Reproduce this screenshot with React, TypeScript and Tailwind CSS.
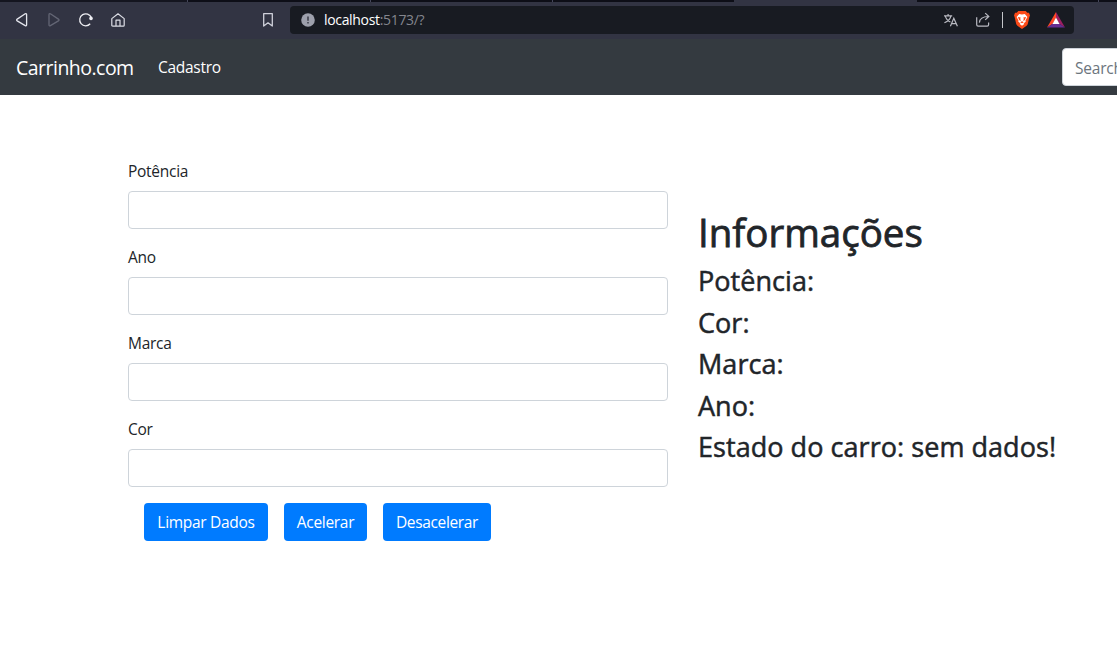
const segoe = "font-['Open_Sans','Noto_Sans',sans-serif]";

function BrowserBar() {
  return (
    <div className="shrink-0">
      <div className="flex h-[2px] bg-[#0d0e17]">
        <div className="w-[188px] border-r border-[#44465a] bg-[#14151f]" />
        <div className="w-[183px] border-r border-[#44465a]" />
        <div className="w-[182px] border-r border-[#44465a]" />
        <div className="w-[181px]" />
        <div className="w-[183px] bg-[#323443]" />
        <div className="w-[182px] border-r border-[#44465a]" />
      </div>
      <div className="flex h-[37px] items-center bg-[#323443] pb-px">
        <svg className="ml-[14px] size-4 shrink-0" viewBox="0 0 16 16" fill="none" stroke="#e4e5ec" strokeWidth="1.3" strokeLinejoin="round">
          <path d="M11.2 1.8Q12.6 1.2 12.6 2.8V12.8Q12.6 14.4 11.2 13.6L3.2 8.9Q2 8 3.2 7.1Z" />
        </svg>
        <svg className="ml-4 size-4 shrink-0" viewBox="0 0 16 16" fill="none" stroke="#646675" strokeWidth="1.3" strokeLinejoin="round">
          <path d="M4.4 1.8Q3 1.2 3 2.8V12.8Q3 14.4 4.4 13.6L12.4 8.9Q13.6 8 12.4 7.1Z" />
        </svg>
        <svg className="ml-4 size-4 shrink-0" viewBox="0 0 16 16" fill="none" stroke="#eeeef3" strokeWidth="1.3">
          <path d="M12.2 11.8A6 6 0 1 1 13.3 5.6" />
          <circle cx="13" cy="6.4" r="1.8" fill="#eeeef3" stroke="none" />
        </svg>
        <svg className="ml-4 size-4 shrink-0" viewBox="0 0 16 16" fill="none" stroke="#dcdde5" strokeWidth="1.2" strokeLinejoin="round">
          <path d="M1.8 6.6L8 1.8L14.2 6.6V13.2Q14.2 14.2 13.2 14.2H2.8Q1.8 14.2 1.8 13.2ZM6 14.2V8.2H10V14.2" />
        </svg>
        <svg className="ml-[134px] size-4 shrink-0" viewBox="0 0 16 16" fill="none" stroke="#cfd0da" strokeWidth="1.3" strokeLinejoin="round">
          <path d="M3.7 1.6H12.3V14L8 10.8L3.7 14Z" />
        </svg>
        <div className="ml-[14px] flex h-7 w-[784px] items-center rounded bg-[#181b22]">
          <svg className="ml-[11px] size-[14px] shrink-0" viewBox="0 0 14 14">
            <circle cx="7" cy="7" r="6.8" fill="#9da0ac" />
            <path d="M7 3.6V7.8M7 9V10.6" stroke="#4a4c58" strokeWidth="1.8" />
          </svg>
          <span className="ml-[9px] text-[14px] leading-5 tracking-[-0.33px] text-[#84868e]">
            <span className="text-white">localhost</span>:5173/?
          </span>
          <svg className="mr-4 ml-auto size-4 shrink-0" viewBox="0 0 16 16" fill="none" stroke="#b9bac2" strokeWidth="1.2">
            <path d="M1 3.8H9.2M5.1 2V3.8M2.3 3.8C3 6.8 5.2 9 7.4 10M7.9 3.8C7.4 6.8 4.6 9.5 1.4 10.8M7.4 14.3L10.8 6.3L14.4 14.3M8.6 11.7H13.2" />
          </svg>
          <svg className="mr-[11px] size-4 shrink-0" viewBox="0 0 16 16" fill="none" stroke="#b9bac2" strokeWidth="1.2">
            <path d="M1.7 5.2V12.8Q1.7 14.2 3.1 14.2H12.2Q13.6 14.2 13.6 12.8V10.6M4.4 10.6C4.7 6.7 7 4.5 13.6 4.5M10.2 1.1L13.8 4.5L10.2 7.9" />
          </svg>
          <div className="h-4 w-px bg-[#c5c6cb]" />
          <svg className="ml-[11px] h-[18px] w-4 shrink-0" viewBox="0 0 16 18">
            <path d="M4.3 0H11.7L13.3 1.7L15 1.8L16 4.4L15.4 6L13.7 13.2L12.6 14.8L8 18L3.4 14.8L2.3 13.2L.6 6L0 4.4L1 1.8L2.7 1.7Z" fill="#fb4a18" />
            <path d="M5.2 3L8 3.5L10.8 3L13.4 6.1L11.5 9.5L11.7 10.8L9.7 12.2L10.3 13L8 14.7L5.7 13L6.3 12.2L4.3 10.8L4.5 9.5L2.6 6.1Z" fill="#fff" />
            <path d="M3.9 6.1L6.7 6.6L6.2 8L7 9.8L5.2 9.2ZM12.1 6.1L9.3 6.6L9.8 8L9 9.8L10.8 9.2ZM6.2 11.2L8 10.3L9.8 11.2L8 12.2Z" fill="#fb4a18" />
          </svg>
          <svg className="mr-[9px] ml-[17px] h-4 w-[18px] shrink-0" viewBox="0 0 18 16">
            <path d="M9 0L0 15.5L6 11.5L9 6Z" fill="#ff4724" />
            <path d="M9 0L18 15.5L12 11.5L9 6Z" fill="#9e1f63" />
            <path d="M0 15.5H18L12 11.5H6Z" fill="#662d91" />
            <path d="M9 5.5L12.5 11.9H5.5Z" fill="#fff" />
          </svg>
        </div>
      </div>
    </div>
  );
}

function Field({ label }: { label: string }) {
  return (
    <label className="mb-4 block text-[15.5px] tracking-[-0.27px]">
      <span className="block pt-px leading-[23px]">{label}</span>
      <input className="mt-2 block h-[38px] w-full rounded border border-[#ced4da] bg-white px-3" />
    </label>
  );
}

function Button({ text, size }: { text: string; size: string }) {
  return (
    <button className={`h-[38px] rounded bg-[#007bff] pt-[2px] text-[15.5px] whitespace-nowrap text-white ${size}`}>
      {text}
    </button>
  );
}

function InfoLine({ text }: { text: string }) {
  return (
    <h3 className="mb-[9.6px] text-[27px] leading-8 tracking-[0.05px] [-webkit-text-stroke:0.5px_#212529]">
      {text}
    </h3>
  );
}

export default function App() {
  return (
    <div className={`flex h-[655px] w-full flex-col overflow-hidden bg-white text-[#212529] ${segoe}`}>
      <BrowserBar />
      <nav className="flex h-14 shrink-0 items-center overflow-hidden bg-[#343a40] pl-4 text-white">
        <span className="w-[118px] pt-[2px] text-[19.5px] leading-[30px] tracking-[-0.52px] whitespace-nowrap">Carrinho.com</span>
        <span className="ml-6 pt-px text-[15.5px] tracking-[-0.28px]">Cadastro</span>
        <input
          className="mr-[-155px] ml-auto h-[38px] w-[210px] shrink-0 rounded border border-[#ced4da] bg-white px-3 pt-[2px] text-[15.5px] tracking-[-0.2px] placeholder:text-[#6c757d]"
          placeholder="Search"
        />
      </nav>
      <main className="flex pt-16 pl-32">
        <div className="w-[540px]">
          <Field label="Potência" />
          <Field label="Ano" />
          <Field label="Marca" />
          <Field label="Cor" />
          <div className="flex gap-4 pl-4">
            <Button text="Limpar Dados" size="w-[124px] tracking-[-0.3px]" />
            <Button text="Acelerar" size="w-[83px] tracking-[-0.3px]" />
            <Button text="Desacelerar" size="w-[108px] tracking-[-0.34px]" />
          </div>
        </div>
        <section className="ml-[30px] pt-[49px] whitespace-nowrap">
          <h1 className="mb-[9px] text-[38.5px] leading-[48px] [-webkit-text-stroke:0.8px_#212529]">Informações</h1>
          <InfoLine text="Potência:" />
          <InfoLine text="Cor:" />
          <InfoLine text="Marca:" />
          <InfoLine text="Ano:" />
          <InfoLine text="Estado do carro: sem dados!" />
        </section>
      </main>
    </div>
  );
}
